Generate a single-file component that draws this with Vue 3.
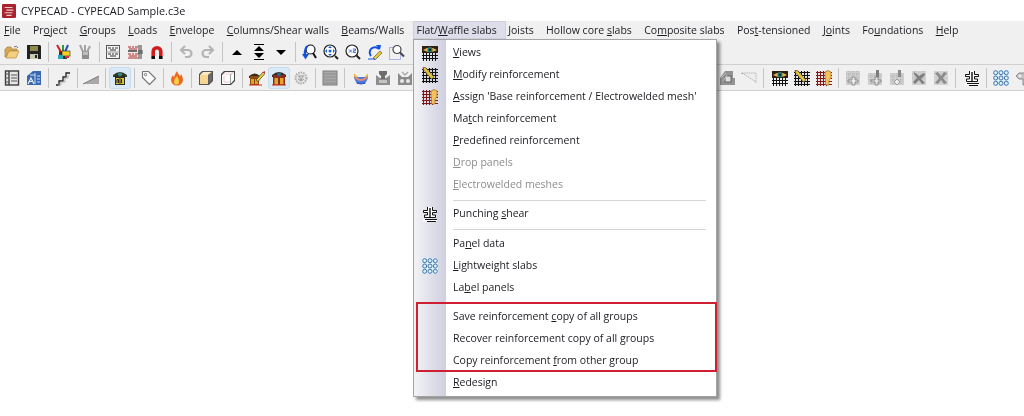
<script setup>
const S = 'sep'
const W = 'sepw'
const row1 = ['open','save',S,'tools','toolsg',S,'docs','docsr','magnet',S,'undo','redo',S,'up','updown','down',S,'zr','zc','zx','zp','zw']
const row2a = ['plan','plana',S,'stairs',S,'ramp',S,'phoneab*',S,'tag',S,'fire',S,'box','boxw',S,'phonep','phoner*','gear',S,'slab',W,'bowl','conn','conn2']
const row2b = ['conn3','rampg',W,'meshe','meshp','meshh',S,'n1','n2','n3','n4','n5',W,'punch',S,'circles','gnut']
const parse = list => list.map(n => ({ sep: n === S || n === W, wide: n === W, active: n.endsWith('*'), href: '#' + n.replace('*', '') }))
const top = parse(row1)
const left = parse(row2a)
const right = parse(row2b)

const menus = [
  ['', 'F', 'ile'], ['Pr', 'o', 'ject'], ['', 'G', 'roups'], ['', 'L', 'oads'], ['', 'E', 'nvelope'],
  ['', 'C', 'olumns/Shear walls'], ['', 'B', 'eams/Walls'], ['Flat/', 'W', 'affle slabs', true], ['', 'J', 'oists'],
  ['Hollow core ', 's', 'labs'], ['Co', 'm', 'posite slabs'], ['Pos', 't', '-tensioned'], ['J', 'o', 'ints'],
  ['Fo', 'u', 'ndations'], ['', 'H', 'elp'],
]
const items = [
  { t: ['', 'V', 'iews'], icon: 'meshe' },
  { t: ['', 'M', 'odify reinforcement'], icon: 'meshp' },
  { t: ['', 'A', "ssign 'Base reinforcement / Electrowelded mesh'"], icon: 'meshh' },
  { t: ['Ma', 't', 'ch reinforcement'] },
  { t: ['', 'P', 'redefined reinforcement'] },
  { t: ['', 'D', 'rop panels'], off: true },
  { t: ['', 'E', 'lectrowelded meshes'], off: true },
  { sep: true },
  { t: ['Punching ', 's', 'hear'], icon: 'punch' },
  { sep: true, tall: true },
  { t: ['Pa', 'n', 'el data'] },
  { t: ['', 'L', 'ightweight slabs'], icon: 'circles' },
  { t: ['La', 'b', 'el panels'] },
  { sep: true, hidden: true },
  { t: ['Save reinforcement ', 'c', 'opy of all groups'] },
  { t: ['Recover reinforcement copy of all ', 'g', 'roups'] },
  { t: ['Copy reinforcement ', 'f', 'rom other group'] },
  { t: ['', 'R', 'edesign'] },
]
</script>

<template>
  <div class="app">
    <svg class="defs" width="0" height="0" aria-hidden="true">
      <defs>
        <symbol id="open" viewBox="0 0 16 16">
          <path d="M1 13V5h1l1-2h4l1 2h5v2H5L2 13z" fill="#d9a94f" stroke="#a8803a" stroke-width=".7"/>
          <path d="M2 14l3-7h10l-3 7z" fill="#f3cf7e" stroke="#b48a3f" stroke-width=".7"/>
          <path d="M10 3q3-2 4 1" fill="none" stroke="#555" stroke-width=".8"/>
        </symbol>
        <symbol id="save" viewBox="0 0 16 16">
          <path d="M1 1h13l1 1v13H1z" fill="#222"/>
          <rect x="4" y="2" width="8" height="5" fill="#8b8b4a"/>
          <rect x="4" y="10" width="8" height="5" fill="#c9c9b0"/>
          <rect x="9" y="11" width="2" height="3" fill="#222"/>
        </symbol>
        <symbol id="tools" viewBox="0 0 16 16">
          <path d="M4 7h8v8H4z" fill="#333"/>
          <path d="M2 1l4 7" stroke="#c22" stroke-width="2"/>
          <path d="M8 1v7" stroke="#2a9a3a" stroke-width="2"/>
          <path d="M13 1l-3 7" stroke="#2a50c0" stroke-width="2"/>
          <rect x="7" y="7" width="8" height="5" fill="#f2d21e" stroke="#222" stroke-width=".6"/>
          <rect x="3" y="11" width="5" height="4" fill="#2aa6b8"/>
          <rect x="10" y="12" width="4" height="2" fill="#d33"/>
        </symbol>
        <symbol id="toolsg" viewBox="0 0 16 16">
          <path d="M5 7h7v8H5z" fill="#8e8e8e"/>
          <path d="M3 1l3 7M8 1v7M13 2l-3 6" stroke="#a2a2a2" stroke-width="2"/>
          <rect x="6" y="8" width="5" height="3" fill="#bdbdbd"/>
        </symbol>
        <symbol id="docs" viewBox="0 0 16 16">
          <rect x="1.500" y="1.500" width="13" height="13" fill="#f4f4f4" stroke="#555"/>
          <path d="M3 4h3M7 4h2M10 4h3M5 6h6M3 10h3M7 10h2M10 10h3M5 12h6" stroke="#333" stroke-width="1.200"/>
          <path d="M1 8h14" stroke="#999"/>
        </symbol>
        <symbol id="docsr" viewBox="0 0 16 16">
          <rect x="1" y="1" width="14" height="14" fill="#f2e8e8"/>
          <path d="M1 3h3M5 3h2M8 3h3M2 5h8M1 10h3M5 10h2M8 10h3M2 12h8M1 14h10" stroke="#b02a2a" stroke-width="1.200"/>
          <path d="M12 1v14M14 1v14M11 7h5M11 9h5" stroke="#444"/>
          <path d="M1 7h9" stroke="#6a6a6a" stroke-width="2"/>
        </symbol>
        <symbol id="magnet" viewBox="0 0 16 16">
          <path d="M4.200 12V7.500a3.800 3.800 0 0 1 7.600 0V12" fill="none" stroke="#d21c1c" stroke-width="3.600"/>
          <path d="M2.400 12h3.600v3H2.400zM10 12h3.600v3H10z" fill="#111"/>
        </symbol>
        <symbol id="undo" viewBox="0 0 16 16">
          <path d="M3.500 6H10a3.500 3.500 0 0 1 0 7H7M7 2L3 6l4 4" fill="none" stroke="#b4b4b4" stroke-width="2.200"/>
        </symbol>
        <symbol id="redo" viewBox="0 0 16 16">
          <path d="M12.500 6H6a3.500 3.500 0 0 0 0 7h3M9 2l4 4-4 4" fill="none" stroke="#b4b4b4" stroke-width="2.200"/>
        </symbol>
        <symbol id="up" viewBox="0 0 16 16"><path d="M3 11l5-5 5 5z" fill="#000"/></symbol>
        <symbol id="down" viewBox="0 0 16 16"><path d="M3 6l5 5 5-5z" fill="#000"/></symbol>
        <symbol id="updown" viewBox="0 0 16 16">
          <path d="M3 .5h10M3 15.500h10" stroke="#000"/>
          <path d="M3 7l5-5 5 5zM3 9l5 5 5-5z" fill="#000"/>
        </symbol>
        <symbol id="zr" viewBox="0 0 16 16">
          <circle cx="9.500" cy="5.500" r="4.500" fill="#fff" stroke="#111" stroke-width="1.200"/>
          <path d="M12 9l3 5" stroke="#111" stroke-width="2"/>
          <path d="M6 2Q3 7 4 12" fill="none" stroke="#1450e0" stroke-width="2.200"/>
          <path d="M1 10l3.500 5.500L8 10z" fill="#1450e0"/>
        </symbol>
        <symbol id="zc" viewBox="0 0 16 16">
          <circle cx="7" cy="7" r="6" fill="#fff" stroke="#222" stroke-width="1.200"/>
          <path d="M12 12l3 3" stroke="#222" stroke-width="2"/>
          <path d="M7 2l2 2H5zM7 12l2-2H5zM2 7l2-2v4zM12 7l-2-2v4z" fill="#1a60e0"/>
          <circle cx="7" cy="7" r="1.500" fill="#1a60e0"/>
        </symbol>
        <symbol id="zx" viewBox="0 0 16 16">
          <circle cx="7" cy="7" r="6" fill="#fff" stroke="#222" stroke-width="1.200"/>
          <path d="M11.500 11.500l3.500 3.500" stroke="#222" stroke-width="2"/>
          <path d="M4 5.500l3 3M7 5.500l-3 3" stroke="#3a6ad0"/>
          <path d="M8 5h2.500v1.700H8.500v1.700H11" fill="none" stroke="#3a6ad0"/>
        </symbol>
        <symbol id="zp" viewBox="0 0 16 16">
          <path d="M4 12A5 5 0 1 1 12 5" fill="none" stroke="#1450e0" stroke-width="2"/>
          <path d="M9 1l5 0-1 5z" fill="#1450e0"/>
          <path d="M6 14l7-7 2 2-7 7z" fill="#e8c838" stroke="#444" stroke-width=".6"/>
          <path d="M1 15h7" stroke="#1450e0"/>
        </symbol>
        <symbol id="zw" viewBox="0 0 16 16">
          <rect x=".5" y="3.500" width="11" height="12" fill="none" stroke="#6a7ae0" stroke-dasharray="1 1"/>
          <circle cx="8" cy="5.500" r="4" fill="#fff" stroke="#444" stroke-width="1.200"/>
          <path d="M11 8.500l4 4" stroke="#444" stroke-width="2"/>
        </symbol>
        <symbol id="plan" viewBox="0 0 16 16">
          <rect x="1.500" y="1" width="13" height="14" fill="#e6e6e6" stroke="#3c3c3c" stroke-width="1.400"/>
          <path d="M5 1v14" stroke="#3c3c3c" stroke-width="1.400"/>
          <path d="M1 4h4M1 8h4M1 12h4M7 5h6M7 8h6M7 11h6" stroke="#555"/>
        </symbol>
        <symbol id="plana" viewBox="0 0 16 16">
          <path d="M1 15V6l6-5h8v14z" fill="#3a68b0"/>
          <path d="M2 14l3-6 3 6M3.500 11.500h3" fill="none" stroke="#e8f2ff" stroke-width="1.200"/>
          <path d="M9 3v11M11 6h3M11 9h3M11 12h3M4 5h5" stroke="#cfe2f8"/>
        </symbol>
        <symbol id="stairs" viewBox="0 0 16 16">
          <path d="M1 15h3v-4h4V7h3V3h4" fill="none" stroke="#222" stroke-width="1.300"/>
          <path d="M3 15h3v-3h4V8h3V5" fill="none" stroke="#b0b0b0" stroke-width="1"/>
        </symbol>
        <symbol id="ramp" viewBox="0 0 16 16"><path d="M0 14L16 6v8z" fill="#a8a8a8"/><path d="M0 14L16 6" stroke="#777"/></symbol>
        <symbol id="phoneab" viewBox="0 0 16 16">
          <path d="M1 5Q8-1 15 5v2h-3V5H4v2H1z" fill="#3a3a2a"/>
          <rect x="3" y="5" width="10" height="10" fill="#2c2c1c"/>
          <circle cx="8" cy="4.500" r="2" fill="#2a8a8a"/>
          <rect x="4" y="8" width="3.500" height="6" fill="#d8c23a"/>
          <rect x="8.500" y="8" width="3.500" height="6" fill="#d8c23a"/>
          <path d="M5 13V9.500h1.500V13M9.500 9v4" stroke="#222" fill="none"/>
        </symbol>
        <symbol id="phonep" viewBox="0 0 16 16">
          <path d="M0 6Q6 1 11 6v2H8V6H3v2H0z" fill="#3a2a1a"/>
          <rect x="1" y="6" width="9" height="9" fill="#8a4a10"/>
          <rect x="2" y="9" width="3" height="5" fill="#e0a020"/>
          <rect x="6" y="9" width="3" height="5" fill="#e0a020"/>
          <path d="M7 10l7-8 2 1.500-7 8z" fill="#eed040" stroke="#333" stroke-width=".7"/>
          <path d="M14 2l2 1.500 0-2.500z" fill="#d22"/>
          <path d="M0 15h13" stroke="#d22"/>
        </symbol>
        <symbol id="phoner" viewBox="0 0 16 16">
          <path d="M1 5Q8-1 15 5v2h-3V5H4v2H1z" fill="#3c2a20"/>
          <rect x="2" y="5" width="12" height="10" fill="#8c2a14"/>
          <circle cx="8" cy="4.500" r="2" fill="#2a6a8a"/>
          <rect x="3.500" y="8" width="3.500" height="6.500" fill="#e2a52a"/>
          <rect x="9" y="8" width="3.500" height="6.500" fill="#e2a52a"/>
          <path d="M1 15h14" stroke="#c22"/>
        </symbol>
        <symbol id="gear" viewBox="0 0 16 16">
          <circle cx="8" cy="8" r="5.500" fill="#e6e6e6" stroke="#acacac" stroke-width="2" stroke-dasharray="1.500 1"/>
          <path d="M5 6h6M5 9l3 2 3-2M6 6l2 4 2-4" fill="none" stroke="#9a9a9a"/>
        </symbol>
        <symbol id="tag" viewBox="0 0 16 16">
          <path d="M1.500 1.500h6l7 7-6 6-7-7z" fill="#fcfcfc" stroke="#777" stroke-width="1.100" stroke-linejoin="round"/>
          <circle cx="4.500" cy="4.500" r="1.200" fill="none" stroke="#777"/>
        </symbol>
        <symbol id="fire" viewBox="0 0 16 16">
          <path d="M8 1q1 3 3 5 1-1 1-2 2 3 2 6a6 5.500 0 0 1-12 0q0-3 2-5 0 2 1 2 1-3 3-6z" fill="#ee6a22"/>
          <path d="M8 6q2 3 2 6a2.500 2.500 0 0 1-5 0q0-3 3-6z" fill="#fbd04a"/>
        </symbol>
        <symbol id="box" viewBox="0 0 16 16">
          <path d="M4 1h11v10l-4 4H1V4z" fill="#555"/>
          <path d="M2 5h8v9H2z" fill="#f6d690"/>
          <path d="M2 5l3-3h9l-4 3z" fill="#fbeac2"/>
          <path d="M10.500 5l3.500-3v8l-3.500 4z" fill="#6a6a6a"/>
        </symbol>
        <symbol id="boxw" viewBox="0 0 16 16">
          <path d="M4 1h11v10l-4 4H1V4z" fill="#444"/>
          <path d="M2 5h8v9H2z" fill="#fff"/>
          <path d="M2 5l3-3h9l-4 3z" fill="#f6eaea"/>
          <path d="M10.500 5l3.500-3v8l-3.500 4z" fill="#fbfbfb"/>
          <path d="M4 6v6h6" fill="none" stroke="#f0c8c8"/>
        </symbol>
        <symbol id="slab" viewBox="0 0 16 16">
          <rect x="1" y="1" width="14" height="14" fill="#a8a8a8" stroke="#7c7c7c"/>
          <path d="M2 4h12M2 7h12M2 10h12M2 13h12" stroke="#8c8c8c"/>
        </symbol>
        <symbol id="bowl" viewBox="0 0 16 16">
          <path d="M1 5l3 2h8l3-2v3l-3 6H4L1 8z" fill="#4a7ae0"/>
          <path d="M1 4q3 5 7 5t7-5v3q-3 4-7 4T1 7z" fill="#e88a70"/>
          <path d="M1 4l3 3M15 4l-3 3" stroke="#e8d040" stroke-width="1.500"/>
          <path d="M4 13q4 2 8 0" stroke="#2a50b0" fill="none"/>
        </symbol>
        <symbol id="conn" viewBox="0 0 16 16">
          <path d="M1 5l4 3h6l4-3v10H1z" fill="#8e8e8e"/>
          <path d="M4 1h8v3l-2 2v3H6V6L4 4z" fill="#6e6e6e"/>
          <rect x="4" y="10" width="8" height="3" fill="#c4c4c4"/>
        </symbol>
        <symbol id="conn2" viewBox="0 0 16 16">
          <path d="M1 3l4 4h6l4-4v12H1z" fill="#8a8a8a"/>
          <path d="M5 2l3 3 3-3" fill="none" stroke="#aaa" stroke-width="1.500"/>
          <circle cx="5" cy="11" r="2" fill="#e6e6e6"/><circle cx="11" cy="11" r="2" fill="#e6e6e6"/>
        </symbol>
        <symbol id="conn3" viewBox="0 0 16 16">
          <path d="M1 8l5-7h8v7h2v7H1z" fill="#939393"/>
          <rect x="6" y="6" width="6" height="6" fill="#dedede" stroke="#666"/>
          <path d="M2 8l5-5M4 11l4-6" stroke="#c4c4c4"/>
        </symbol>
        <symbol id="rampg" viewBox="0 0 16 16">
          <path d="M1 3h14v10z" fill="#eee"/>
          <path d="M1 3h14M1 3l14 9M15 3v10" stroke="#b4b4b4" stroke-dasharray="1.500 .8"/>
          <path d="M1 3v1" stroke="#888"/>
        </symbol>
        <symbol id="meshe" viewBox="0 0 16 16">
          <path d="M0 7.500h16M0 10.500h16M0 13.500h16M1.500 5v11M4.500 5v11M7.500 5v11M10.500 5v11M13.500 5v11" stroke="#111"/>
          <path d="M0 1h16v7H0z" fill="#2e2010"/>
          <path d="M1 5Q8 0 15 5 8 9 1 5z" fill="#e8b050"/>
          <circle cx="8" cy="4.800" r="2.500" fill="#0e7a7a"/><circle cx="8" cy="4.800" r="1" fill="#000"/>
        </symbol>
        <symbol id="meshp" viewBox="0 0 16 16">
          <path d="M0 2.500h16M0 5.500h16M0 8.500h16M0 11.500h16M0 14.500h16M1.500 1v15M4.500 1v15M7.500 1v15M10.500 1v15M13.500 1v15" stroke="#111" stroke-width="1.100"/>
          <path d="M1 2l2-2 9 10-2.500 2z" fill="#e6c52c" stroke="#444" stroke-width=".5"/>
          <path d="M1 2l2-2-2.500-.5z" fill="#d33"/>
        </symbol>
        <symbol id="meshh" viewBox="0 0 16 16">
          <path d="M0 2.500h16M0 5.500h16M0 8.500h16M0 11.500h16M0 14.500h16M1.500 1v15M4.500 1v15M7.500 1v15M10.500 1v15" stroke="#7c1a1a" stroke-width="1.100"/>
          <path d="M9 2q3-3 6 0v6l-2 2v5H9.500v-5L9 7z" fill="#f6c05a" stroke="#8a5a20" stroke-width=".6"/>
        </symbol>
        <symbol id="n1" viewBox="0 0 16 16">
          <rect x="1" y="1" width="14" height="14" fill="#cfcfcf"/>
          <path d="M1 4h14M1 8h14M4 1v14M8 1v14M12 1v14" stroke="#b0b0b0" stroke-dasharray="1 1"/>
          <path d="M7 7h3v3h3v2h-3v3H7v-3H3v-2h4z" fill="#eee" stroke="#8a8a8a"/>
        </symbol>
        <symbol id="n2" viewBox="0 0 16 16">
          <rect x="1" y="3" width="14" height="12" fill="#cfcfcf"/>
          <path d="M1 6h14M1 10h14M4 3v12M8 3v12M12 3v12" stroke="#b0b0b0" stroke-dasharray="1 1"/>
          <path d="M8 7h3v3h3v2h-3v3H8v-3H4v-2h4z" fill="#e4e4e4" stroke="#8a8a8a"/>
          <rect x="9" y="0" width="3" height="7" fill="#7c7c7c"/>
        </symbol>
        <symbol id="n3" viewBox="0 0 16 16">
          <rect x="1" y="3" width="14" height="12" fill="#cfcfcf"/>
          <path d="M1 6h14M1 10h14M4 3v12M8 3v12M12 3v12" stroke="#b0b0b0" stroke-dasharray="1 1"/>
          <path d="M9 0h3v7H9z" fill="#8a8a8a"/>
          <path d="M5 12l3-3 3 3-3 3z" fill="#eee" stroke="#999"/>
        </symbol>
        <symbol id="n4" viewBox="0 0 16 16">
          <rect x="1" y="1" width="14" height="14" fill="#d0d0d0"/>
          <path d="M1 4h14M1 8h14M4 1v14M12 1v14" stroke="#b4b4b4" stroke-dasharray="1 1"/>
          <path d="M3 2l5 4 5-3 1 2-4 4 4 4-3 1-3-4-4 4-2-2 4-4-3-4z" fill="#7e7e7e"/>
        </symbol>
        <symbol id="n5" viewBox="0 0 16 16">
          <rect x="1" y="1" width="14" height="14" fill="#d4d4d4"/>
          <path d="M1 4h14M1 8h14M1 12h14" stroke="#bcbcbc" stroke-dasharray="1 1"/>
          <path d="M2 3l3-1 3 4 3-4 3 1-4 5 4 5-3 1-3-4-3 4-3-1 4-5z" fill="#8c8c8c"/>
        </symbol>
        <symbol id="punch" viewBox="0 0 16 16">
          <path d="M1 13.500h14v2H1z" fill="#fff"/>
          <path d="M5.500 1v3.500h-4v2h4V9h-3v2.500h11V9h-3V6.500h4v-2h-4V1" fill="#fff" stroke="#111" stroke-width="1"/>
          <path d="M8 2v9" stroke="#111" stroke-width="1.400"/>
          <path d="M3 13.500h12M5 15.500h9" stroke="#111" stroke-width="1.100"/>
        </symbol>
        <symbol id="circles" viewBox="0 0 16 16">
          <rect width="16" height="16" fill="#d8f2fb"/>
          <g fill="none" stroke="#4a6fa6" stroke-width="1">
            <circle cx="2.700" cy="2.700" r="2"/><circle cx="8" cy="2.700" r="2"/><circle cx="13.300" cy="2.700" r="2"/>
            <circle cx="2.700" cy="8" r="2"/><circle cx="8" cy="8" r="2"/><circle cx="13.300" cy="8" r="2"/>
            <circle cx="2.700" cy="13.300" r="2"/><circle cx="8" cy="13.300" r="2"/><circle cx="13.300" cy="13.300" r="2"/>
          </g>
        </symbol>
        <symbol id="gnut" viewBox="0 0 16 16">
          <path d="M4 3h8l3 3v3h-3v6H8V9H4L1 6z" fill="#c2c2c2" stroke="#8a8a8a"/>
          <circle cx="5" cy="6" r="1.500" fill="#eee"/>
        </symbol>
      </defs>
    </svg>

    <header class="title">
      <svg class="logo" viewBox="0 0 16 16">
        <rect width="16" height="16" rx="1.500" fill="#a8232e"/>
        <path d="M3 4h9M5 7h8M3 10h9M5 13h6" stroke="#e9c9c9" stroke-width="1.400"/>
      </svg>
      <span>CYPECAD - CYPECAD Sample.c3e</span>
    </header>

    <nav class="menubar">
      <div v-for="m in menus" :key="m[0] + m[1] + m[2]" class="mtop" :class="{ on: m[3] }">{{ m[0] }}<u>{{ m[1] }}</u>{{ m[2] }}</div>
    </nav>

    <div class="tools">
      <template v-for="(b, i) in top" :key="i">
        <i v-if="b.sep" class="tsep"></i>
        <span v-else class="tb"><svg class="ic"><use :href="b.href" /></svg></span>
      </template>
    </div>
    <div class="tools second">
      <template v-for="(b, i) in left" :key="i">
        <i v-if="b.sep" class="tsep" :class="{ wide: b.wide }"></i>
        <span v-else class="tb" :class="{ act: b.active }"><svg class="ic"><use :href="b.href" /></svg></span>
      </template>
      <div class="gapper"></div>
      <template v-for="(b, i) in right" :key="'r' + i">
        <i v-if="b.sep" class="tsep" :class="{ wide: b.wide }"></i>
        <span v-else class="tb"><svg class="ic"><use :href="b.href" /></svg></span>
      </template>
    </div>

    <div class="dropdown">
      <template v-for="(it, i) in items" :key="i">
        <div v-if="it.sep" class="msep" :class="{ tall: it.tall, none: it.hidden }"></div>
        <div v-else class="mi" :class="{ off: it.off }">
          <span class="gut"><svg v-if="it.icon" class="ic"><use :href="'#' + it.icon" /></svg></span>
          <span class="lbl">{{ it.t[0] }}<u>{{ it.t[1] }}</u>{{ it.t[2] }}</span>
        </div>
      </template>
      <div class="mark"></div>
    </div>
  </div>
</template>

<style>
html, body { margin: 0; background: #fff; }
</style>

<style scoped>
.app {
  position: relative;
  width: 1024px;
  height: 416px;
  overflow: hidden;
  background: #fff;
  font-family: "Open Sans", Roboto, sans-serif;
  font-size: 10.500px;
  color: #1b1b22;
  filter: blur(0.35px);
}
.defs { position: absolute; }
.ic { width: 16px; height: 16px; display: block; }
.title {
  height: 21px;
  display: flex;
  align-items: center;
  gap: 5px;
  padding-left: 2px;
  font-size: 10.900px;
}
.logo { width: 14px; height: 14px; }
.menubar {
  height: 18px;
  background: #f0f0f0;
  display: flex;
  align-items: center;
}
.mtop {
  height: 18px;
  line-height: 18px;
  padding: 0 6.200px;
  white-space: nowrap;
}
.mtop:first-child { padding-left: 4px; }
.mtop.on {
  background: #dedeeb;
  box-shadow: inset 0 0 0 1px #cfcfe0;
  padding: 0 9px 0 3px;
  margin: 0 -3.800px 0 3px;
}
.tools {
  height: 25px;
  background: #f0f0f0;
  display: flex;
  align-items: center;
  padding-left: 1px;
  border-bottom: 1px solid #d0d0d0;
}
.tb {
  width: 22px;
  height: 22px;
  flex: none;
  box-sizing: border-box;
  display: flex;
  align-items: center;
  justify-content: center;
}
.tb.act {
  background: #d9e9f5;
  border: 1px solid #c4dcec;
  border-radius: 3px;
}
.tsep {
  width: 6.700px;
  height: 20px;
  flex: none;
  position: relative;
}
.tsep.wide { width: 9.400px; }
.tsep::after {
  content: "";
  position: absolute;
  left: 3px;
  top: 0;
  bottom: 0;
  width: 1px;
  background: #c4c4c4;
}
.gapper { width: 300px; flex: none; }
.second { overflow: hidden; }
.dropdown {
  position: absolute;
  left: 413px;
  top: 39px;
  width: 302px;
  padding: 2px 0;
  background: #fff;
  border: 1px solid #a4a4a4;
  box-shadow: 3px 3px 3px rgba(0, 0, 0, .45);
}
.dropdown::before {
  content: "";
  position: absolute;
  left: 0;
  top: 0;
  bottom: 0;
  width: 32px;
  background: linear-gradient(90deg, #f2f2f6, #cfcfdf);
}
.mi {
  position: relative;
  height: 22px;
  display: flex;
  align-items: center;
  white-space: nowrap;
}
.lbl { padding-bottom: 2px; }
.mi.off { color: #8d8d8d; }
.gut {
  width: 39px;
  flex: none;
  display: flex;
  justify-content: center;
  padding-right: 7px;
  box-sizing: border-box;
}
.msep {
  position: relative;
  height: 7px;
}
.msep.tall { height: 8px; }
.msep::after {
  content: "";
  position: absolute;
  left: 39px;
  right: 10px;
  top: 4px;
  height: 1px;
  background: #d6d6d6;
}
.msep.none::after { display: none; }
.mark {
  position: absolute;
  left: 2px;
  top: 262px;
  width: 301px;
  height: 70px;
  box-sizing: border-box;
  border: 2px solid #d01f32;
}
</style>
